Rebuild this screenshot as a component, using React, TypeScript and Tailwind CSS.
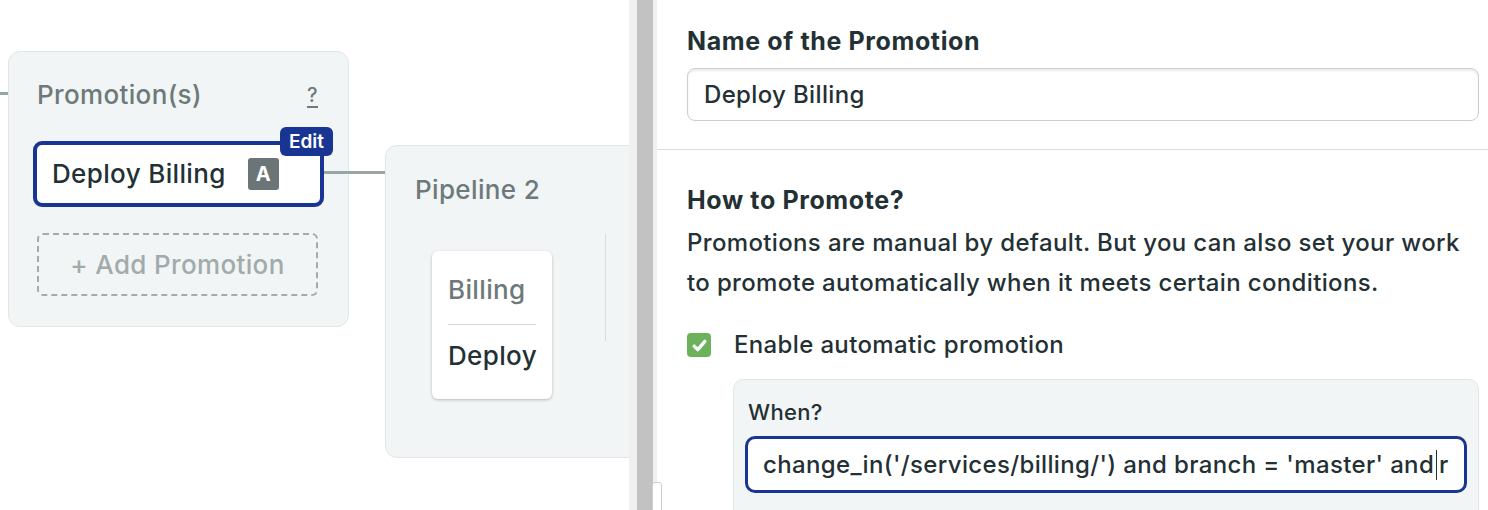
import React from "react";

const font = { fontFamily: "Inter, 'Noto Sans', sans-serif" };

function PromotionCard() {
  return (
    <div className="mt-[51px] w-[341px] h-[276px] shrink-0 rounded-[12px] border border-[#e1e6e6] bg-[#f2f5f5] px-[28px] pt-[27px]">
      <div className="flex items-center justify-between pr-[2px]">
        <span className="text-[26px] leading-[32px] text-[#6d797a]">Promotion(s)</span>
        <span className="text-[20px] leading-[32px] text-[#6d797a] underline underline-offset-4">?</span>
      </div>

      {/* Selected promotion */}
      <div className="relative -ml-[4px] mt-[30px] flex h-[66px] w-[291px] items-center rounded-[9px] border-[4px] border-[#183594] bg-white pl-[15px]">
        <span className="text-[26px] leading-[32px] text-[#233034]">Deploy Billing</span>
        <span className="ml-[22px] flex h-[32px] w-[31px] items-center justify-center rounded-[3px] bg-[#6b7577] text-[20px] font-bold tracking-normal text-white">
          A
        </span>
        <span className="absolute -right-[13px] -top-[18px] rounded-[6px] bg-[#183594] px-[9px] text-[19px] leading-[29px] font-semibold tracking-normal text-white">
          Edit
        </span>
      </div>

      <div className="mt-[26px] flex h-[63px] w-[281px] items-center justify-center rounded-[6px] border-2 border-dashed border-[#a3acac]">
        <span className="text-[26px] leading-[32px] text-[#a2abab]">+ Add Promotion</span>
      </div>
    </div>
  );
}

function PipelineCard() {
  return (
    <div className="ml-[36px] mt-[145px] h-[313px] w-[300px] shrink-0 rounded-[12px] border border-[#e1e6e6] bg-[#f2f5f5] pl-[29px] pt-[28px]">
      <div className="text-[26px] leading-[32px] text-[#6d797a]">Pipeline 2</div>
      <div className="mt-[28px] flex items-start">
        <div className="ml-[17px] mt-[17px] flex h-[148px] w-[120px] flex-col rounded-[6px] bg-white px-[16px] shadow-[0_1px_3px_rgba(0,0,0,0.25)]">
          <div className="pt-[23px] text-[26px] leading-[32px] text-[#6d797a]">Billing</div>
          <div className="mt-[18px] h-px bg-[#d3d9d9]" />
          <div className="pt-[15px] text-[26px] leading-[32px] text-[#233034]">Deploy</div>
        </div>
        <div className="ml-[53px] h-[107px] w-px bg-[#d6dcdc]" />
      </div>
    </div>
  );
}

export default function App() {
  return (
    <div className="flex h-[510px] w-[1488px] overflow-hidden bg-white font-medium tracking-[0.022em]" style={font}>
      {/* Canvas */}
      <div className="relative flex h-full w-[629px] shrink-0 items-start overflow-hidden">
        <div className="mt-[92px] h-[3px] w-[8px] shrink-0 bg-[#9aa6a6]" />
        <PromotionCard />
        <PipelineCard />
        {/* connector */}
        <div className="absolute left-[324px] top-[171px] h-[3px] w-[61px] bg-[#9aa6a6]" />
      </div>

      {/* Splitter */}
      <div className="relative flex h-full shrink-0">
        <div className="h-full w-[8px] bg-[#f0f0f0]" />
        <div className="h-full w-[16px] bg-[#c2c2c2]" />
        <div className="h-full w-[4px] bg-[#f0f0f0]" />
        <div className="absolute left-[23px] top-[482px] h-[40px] w-[10px] rounded-[3px] border border-[#cfcfcf] bg-white" />
      </div>

      {/* Side panel */}
      <div className="flex-1 text-[#233034]">
        <div className="pl-[30px] pr-[9px] pt-[26px]">
          <div className="text-[25px] leading-[30px] font-bold tracking-[0.025em]">Name of the Promotion</div>
          <div className="mt-[12px] flex h-[53px] items-center rounded-[8px] border-[1.5px] border-[#cbcfcf] pl-[16px] shadow-[inset_0_2px_2px_rgba(0,0,0,0.08)]">
            <span className="text-[24px]">Deploy Billing</span>
          </div>
        </div>

        <div className="mt-[28px] h-px bg-[#d8dede]" />

        <div className="pl-[30px] pr-[9px] pt-[35px]">
          <div className="text-[25px] leading-[30px] font-bold tracking-[0.025em]">How to Promote?</div>
          <p className="mt-[8px] text-[24px] leading-[40px]">
            Promotions are manual by default. But you can also set your work
            <br />
            to promote automatically when it meets certain conditions.
          </p>

          <div className="mt-[27px] flex items-center">
            <span className="flex h-[24px] w-[24px] items-center justify-center rounded-[4px] bg-[#6bb25a]">
              <svg viewBox="0 0 16 16" className="h-[19px] w-[19px]" fill="none" stroke="white" strokeWidth={2.8} strokeLinecap="round" strokeLinejoin="round">
                <path d="M3.5 8.5l3 3 6-7" />
              </svg>
            </span>
            <span className="ml-[23px] text-[24px] leading-[30px]">Enable automatic promotion</span>
          </div>

          <div className="ml-[46px] mt-[19px] h-[160px] rounded-[10px] border border-[#e1e6e6] bg-[#f2f5f5] px-[11px] pt-[17px]">
            <div className="pl-[3px] text-[22px] leading-[30px]">When?</div>
            <div className="mt-[9px] flex h-[57px] items-center overflow-hidden rounded-[10px] border-[3px] border-[#183594] bg-white pl-[15px]">
              <span className="whitespace-nowrap text-[24px]">
                change_in('/services/billing/') and branch = 'master' and
              </span>
              <span className="mx-[2px] h-[30px] w-px bg-[#233034]" />
              <span className="whitespace-nowrap text-[24px]">r</span>
            </div>
          </div>
        </div>
      </div>
    </div>
  );
}
